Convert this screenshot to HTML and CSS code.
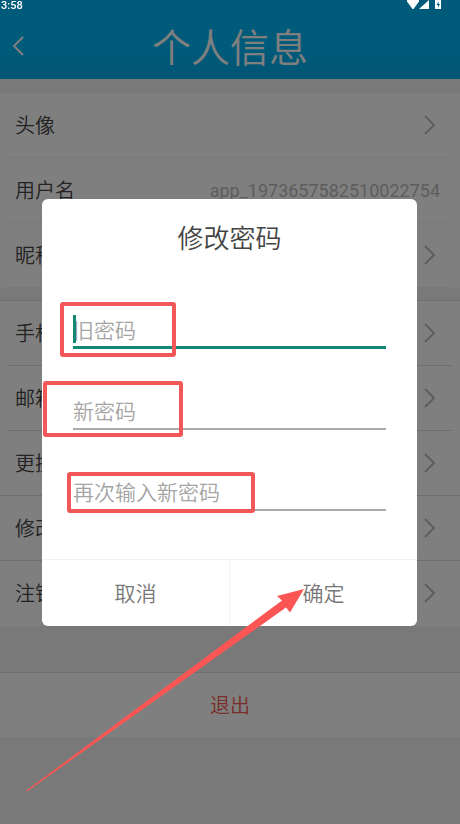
FILE: index.html
```html
<!DOCTYPE html>
<html lang="zh-CN">
<head>
<meta charset="utf-8">
<meta name="viewport" content="width=device-width, initial-scale=1">
<title>个人信息</title>
<link rel="stylesheet" href="styles.css">
</head>
<body>
<div class="status">
  <span>3:58</span>
  <svg class="status-icons" viewBox="0 0 36 10" aria-hidden="true">
    <path d="M1 0h12v1.500L7.500 9H6.500L1 1.500z"/>
    <path d="M13 9L23 0v9z"/>
    <path d="M29 0h6v9h-6z"/>
    <path class="bolt" d="M32.500 1.500L30.500 5h1.500v2.500L34 4h-1.500z"/>
  </svg>
</div>
<header class="header">
  <a class="back" href="#" aria-label="返回"><svg viewBox="0 0 12 20"><path d="M11 1L2 10l9 9"/></svg></a>
  <h1>个人信息</h1>
</header>
<main>
  <section class="group">
    <a class="row" href="#"><span>头像</span><svg class="chev" viewBox="0 0 12 20"><path d="M1 1l9 9-9 9"/></svg></a>
    <div class="row"><span>用户名</span><span class="value">app_1973657582510022754</span></div>
    <a class="row" href="#"><span>昵称</span><svg class="chev" viewBox="0 0 12 20"><path d="M1 1l9 9-9 9"/></svg></a>
  </section>
  <section class="group lined">
    <a class="row" href="#"><span>手机</span><svg class="chev" viewBox="0 0 12 20"><path d="M1 1l9 9-9 9"/></svg></a>
    <a class="row" href="#"><span>邮箱</span><svg class="chev" viewBox="0 0 12 20"><path d="M1 1l9 9-9 9"/></svg></a>
    <a class="row full" href="#"><span>更换</span><svg class="chev" viewBox="0 0 12 20"><path d="M1 1l9 9-9 9"/></svg></a>
    <a class="row full" href="#"><span>修改密码</span><svg class="chev" viewBox="0 0 12 20"><path d="M1 1l9 9-9 9"/></svg></a>
    <a class="row" href="#"><span>注销</span><svg class="chev" viewBox="0 0 12 20"><path d="M1 1l9 9-9 9"/></svg></a>
  </section>
  <button class="logout" type="button">退出</button>
</main>
<div class="overlay">
  <form class="dialog" role="dialog" aria-labelledby="dialog-title">
    <h2 id="dialog-title">修改密码</h2>
    <div class="fields">
      <div class="field active">
        <input type="password" placeholder="旧密码" aria-label="旧密码">
        <span class="caret"></span>
        <span class="mark mark-old"></span>
      </div>
      <div class="field">
        <input type="password" placeholder="新密码" aria-label="新密码">
        <span class="mark mark-new"></span>
      </div>
      <div class="field">
        <input type="password" placeholder="再次输入新密码" aria-label="再次输入新密码">
        <span class="mark mark-repeat"></span>
      </div>
    </div>
    <div class="actions">
      <button type="button">取消</button>
      <button type="button">确定</button>
    </div>
    <svg class="arrow" viewBox="0 0 279 204" aria-hidden="true">
      <path d="M0.500 202.500L256 12.500 251 8 278 1 264 24.500 260 19.500 1 203.500z"/>
    </svg>
  </form>
</div>
</body>
</html>
```
FILE: styles.css
```css
* { box-sizing: border-box; }

body {
  margin: 0;
  min-height: 100vh;
  background: #f3f3f3;
  color: #444;
  font: 350 20px/28px Roboto, "Noto Sans CJK SC", sans-serif;
}

h1, h2 { margin: 0; font-weight: 350; }
a { color: inherit; text-decoration: none; }
button, input { font: inherit; color: inherit; border: 0; border-radius: 0; background: none; padding: 0; margin: 0; }
svg { display: block; }

.status {
  position: fixed;
  top: 0;
  left: 0;
  right: 0;
  z-index: 3;
  display: flex;
  justify-content: space-between;
  padding: 0 18px 0 1px;
  color: #fff;
  font-size: 11px;
  font-weight: 500;
  line-height: 12px;
}
.status-icons { width: 36px; height: 10px; fill: #fff; }
.status-icons .bolt { fill: #00587a; }

.header {
  position: relative;
  height: 79px;
  padding-top: 21px;
  background: linear-gradient(#00b6f4, #00b6f4 60%, #00a9e8);
  color: #fff;
  text-align: center;
}
.header h1 { font-size: 39px; line-height: 56px; }
.back { position: absolute; left: 12px; top: 36px; }
.back svg { width: 12px; height: 20px; fill: none; stroke: #fff; stroke-width: 2; }

main { padding-top: 1px; }
.group { margin-top: 12px; border-top: 1px solid #f0f0f0; background: #fff; }
.lined { border-color: #e0e0e0; }
.row {
  display: flex;
  align-items: center;
  justify-content: space-between;
  height: 65px;
  margin: 0 8px;
  padding: 0 16px 0 7px;
  border-bottom: 1px solid #f0f0f0;
}
.row span { padding-top: 1px; }
.lined .row { border-color: #dcdcdc; }
.lined .full { margin: 0; padding: 0 24px 0 15px; }
.lined .row:last-child { border-color: transparent; }
.chev { width: 12px; height: 20px; fill: none; stroke: #bbb; stroke-width: 2; }
.value { margin-right: -4px; color: #bbb; font-size: 18px; font-weight: 400; }

.logout {
  display: block;
  width: 100%;
  height: 65px;
  margin-top: 46px;
  padding-top: 2px;
  border-top: 1px solid #e0e0e0;
  background: #fff;
  color: #f4584c;
}

.overlay {
  position: fixed;
  inset: 0;
  z-index: 2;
  display: grid;
  place-items: center;
  padding: 0 43px 0 42px;
  background: rgba(0, 0, 0, .5);
}
.dialog {
  position: relative;
  width: 100%;
  border-radius: 6px;
  background: #fff;
}
.dialog h2 {
  padding-top: 22px;
  font-size: 26px;
  line-height: 36px;
  text-align: center;
}
.fields {
  display: grid;
  gap: 39px;
  padding: 50px 31px 48px;
}
.field { position: relative; height: 42px; border-bottom: 2px solid #aaa; }
.field.active { border-bottom: 3px solid #128875; }
.field input { display: block; width: 100%; height: 39px; padding-top: 10px; font-size: 21px; outline: 0; }
.field input::placeholder { color: #a4a4a4; opacity: 1; }
.caret { position: absolute; left: 0; top: 8px; width: 3px; height: 28px; background: #128875; }

.mark { position: absolute; border: 4px solid #f15857; border-radius: 3px; pointer-events: none; }
.mark-old { left: -13px; top: -5px; width: 116px; height: 55px; }
.mark-new { left: -30px; top: -7px; width: 140px; height: 56px; }
.mark-repeat { left: -6px; top: 3px; width: 188px; height: 41px; }

.actions { display: flex; border-top: 1px solid #f2f2f2; }
.actions button { flex: 1; height: 66px; padding-top: 2px; color: #777; font-size: 21px; }
.actions button + button { border-left: 1px solid #f2f2f2; }

.arrow { position: absolute; left: -16px; top: 389px; width: 279px; height: 204px; fill: #fc5654; pointer-events: none; }
```
